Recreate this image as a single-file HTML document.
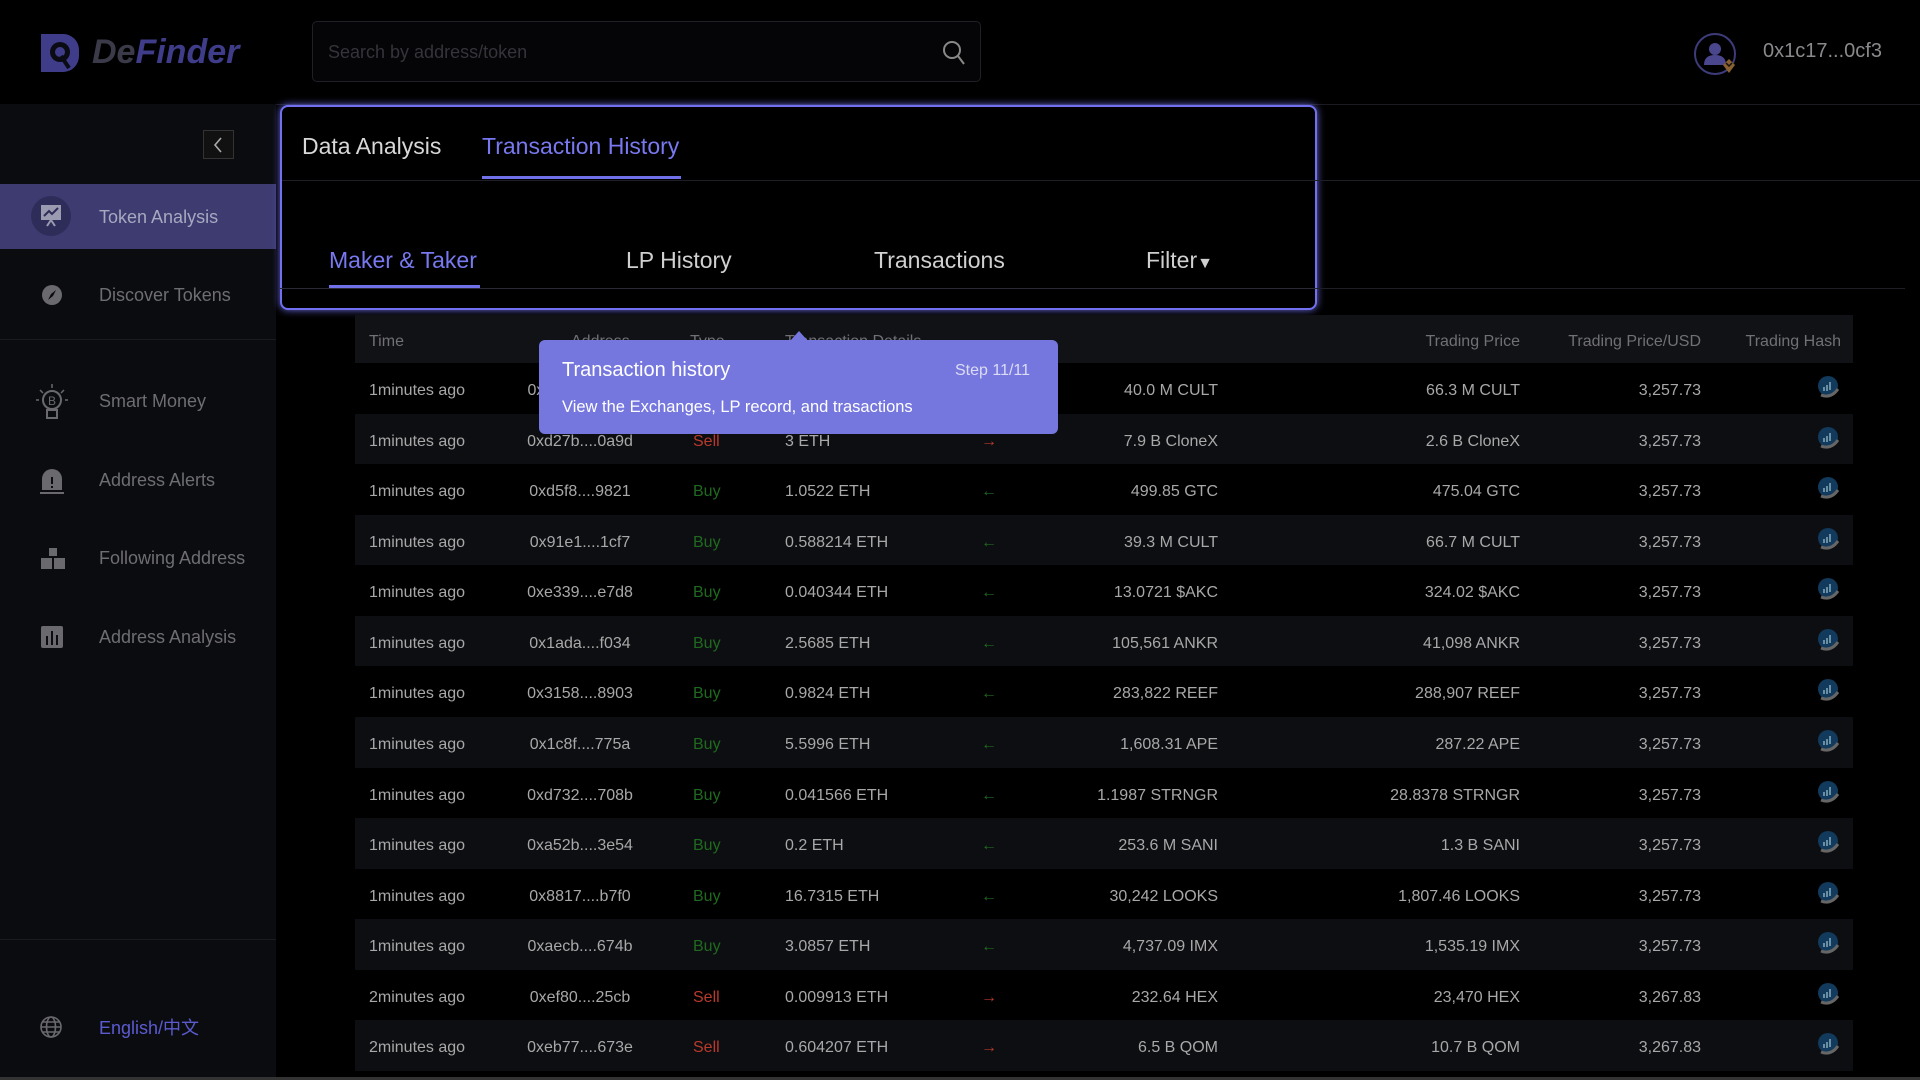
<!DOCTYPE html>
<html><head><meta charset="utf-8"><style>
*{margin:0;padding:0;box-sizing:border-box}
body{width:1920px;height:1080px;background:#000;font-family:"Liberation Sans",sans-serif;position:relative;overflow:hidden;color:#a8a8a8}
.a{position:absolute;white-space:nowrap}
.side{position:absolute;left:0;top:104px;width:276px;height:976px;background:#0b0c10}
.nav{position:absolute;left:99px;font-size:18px;color:#6e6e72}
.hl{position:absolute;left:0;top:80px;width:276px;height:65px;background:#3d3b70}
.row{position:absolute;left:355px;width:1498px;height:50.6px;font-size:16px;color:#a8a8a8}
.row span{position:absolute;top:19px;white-space:nowrap}
.g{background:#0d0e11}
.r{text-align:right}
</style></head><body>
<div class="a" style="left:0;top:104px;width:1920px;height:1px;background:#1a1b22"></div>
<svg class="a" style="left:39px;top:32px" width="42" height="42" viewBox="0 0 42 42"><path d="M2 2h22a16 16 0 0 1 16 16v6a16 16 0 0 1-16 16H2z" fill="#3f3d8a"/><circle cx="21" cy="20" r="10" fill="#0b0b14"/><circle cx="21" cy="20" r="5" fill="#3f3d8a"/><path d="M22 24l8 12" stroke="#0b0b14" stroke-width="4"/></svg>
<div class="a" style="left:92px;top:33px;font-size:34px;font-weight:bold;font-style:italic;color:#3f3d8a"><span style="color:#3a3a48">De</span>Finder</div>
<div class="a" style="left:312px;top:21px;width:669px;height:61px;border:1px solid #1f2026;border-radius:5px;background:#050507"></div>
<div class="a" style="left:328px;top:42px;font-size:18px;color:#34343a">Search by address/token</div>
<svg class="a" style="left:942px;top:40px" width="24" height="26" viewBox="0 0 24 26"><circle cx="10" cy="10" r="8" fill="none" stroke="#888" stroke-width="2"/><path d="M16 16l6 8" stroke="#888" stroke-width="2"/></svg>
<svg class="a" style="left:1693px;top:32px" width="50" height="50" viewBox="0 0 50 50"><circle cx="22" cy="22" r="20" fill="none" stroke="#3d3b7a" stroke-width="2"/><circle cx="22" cy="17" r="6" fill="#4a478e"/><path d="M11 33q0-10 11-10t11 10z" fill="#4a478e"/><path d="M30 33l6-6 6 6-6 8z" fill="#8a6030"/><path d="M33 31l3 3 3-3" stroke="#111" fill="none" stroke-width="1.5"/></svg>
<div class="a" style="left:1763px;top:40px;font-size:20px;color:#8a8a8e">0x1c17...0cf3</div>

<div class="side">
 <div class="a" style="left:203px;top:26px;width:31px;height:29px;border:1px solid #333;background:#111"></div>
 <svg class="a" style="left:212px;top:32px" width="12" height="18" viewBox="0 0 12 18"><path d="M9 2L3 9l6 7" stroke="#aaa" stroke-width="1.6" fill="none"/></svg>
 <div class="hl"></div>
 <div class="a" style="left:31px;top:92px;width:40px;height:40px;border-radius:50%;background:#2e2c58"></div>
 <svg class="a" style="left:40px;top:100px" width="22" height="24" viewBox="0 0 22 24"><rect x="1" y="1" width="20" height="15" fill="#9a9ab0"/><path d="M4 12l5-5 3 3 6-6" stroke="#2e2c58" stroke-width="2" fill="none"/><path d="M7 22l4-6 4 6" stroke="#9a9ab0" stroke-width="2" fill="none"/></svg>
 <div class="nav" style="top:103px;color:#a8a8c0">Token Analysis</div>
 <svg class="a" style="left:41px;top:180px" width="22" height="22" viewBox="0 0 22 22"><circle cx="11" cy="11" r="10" fill="#6a6a6e"/><path d="M15 6l-3 6-5 4 3-6z" fill="#0b0c10"/></svg>
 <div class="nav" style="top:181px">Discover Tokens</div>
 <div class="a" style="left:0;top:235px;width:276px;height:1px;background:#1b1c22"></div>
 <svg class="a" style="left:34px;top:276px" width="36" height="44" viewBox="0 0 36 44"><circle cx="18" cy="20" r="9" fill="none" stroke="#6a6a6e" stroke-width="2"/><path d="M13 30h10v8h-10z" fill="none" stroke="#6a6a6e" stroke-width="2"/><text x="14" y="25" font-size="12" fill="#6a6a6e" font-family="Liberation Sans">B</text><path d="M18 4v4M6 10l3 3M30 10l-3 3M2 20h3M31 20h3" stroke="#6a6a6e" stroke-width="1.5"/></svg>
 <div class="nav" style="top:287px">Smart Money</div>
 <svg class="a" style="left:40px;top:365px" width="24" height="26" viewBox="0 0 24 26"><path d="M2 21V10a10 10 0 0 1 20 0v11z" fill="#6a6a6e"/><rect x="0" y="23" width="24" height="2" fill="#6a6a6e"/><rect x="11" y="8" width="2" height="7" fill="#0b0c10"/><rect x="11" y="17" width="2" height="2" fill="#0b0c10"/></svg>
 <div class="nav" style="top:366px">Address Alerts</div>
 <svg class="a" style="left:40px;top:443px" width="26" height="24" viewBox="0 0 26 24"><path d="M9 1h8v8h-8zM1 11h11v11H1zM14 11h11v11H14z" fill="#6a6a6e"/></svg>
 <div class="nav" style="top:444px">Following Address</div>
 <svg class="a" style="left:41px;top:522px" width="22" height="22" viewBox="0 0 22 22"><rect width="22" height="22" rx="2" fill="#6a6a6e"/><rect x="5" y="10" width="2" height="9" fill="#0b0c10"/><rect x="10" y="5" width="2" height="14" fill="#0b0c10"/><rect x="15" y="9" width="2" height="10" fill="#0b0c10"/></svg>
 <div class="nav" style="top:523px">Address Analysis</div>
 <div class="a" style="left:0;top:835px;width:276px;height:1px;background:#1b1c22"></div>
 <svg class="a" style="left:39px;top:911px" width="24" height="24" viewBox="0 0 24 24"><circle cx="12" cy="12" r="10" fill="none" stroke="#6a6a6e" stroke-width="1.6"/><ellipse cx="12" cy="12" rx="4.5" ry="10" fill="none" stroke="#6a6a6e" stroke-width="1.6"/><path d="M2 12h20M4 7h16M4 17h16" stroke="#6a6a6e" stroke-width="1.4"/></svg>
 <div class="nav" style="top:910px;color:#5b5bd0;font-family:'Liberation Sans','Noto Sans CJK SC',sans-serif">English/中文</div>
</div>

<div class="a" style="left:280px;top:105px;width:1037px;height:205px;border:2px solid #7070f0;border-radius:8px;box-shadow:0 0 8px #6a6ae0;background:#000"></div>
<div class="a" style="left:282px;top:180px;width:1638px;height:1px;background:#1d1e26"></div>
<div class="a" style="left:302px;top:133px;font-size:23px;color:#d8d8d8">Data Analysis</div>
<div class="a" style="left:482px;top:133px;font-size:23px;color:#7878f0">Transaction History</div>
<div class="a" style="left:482px;top:176px;width:199px;height:3px;background:#7070e8"></div>
<div class="a" style="left:300px;top:288px;width:1605px;height:1px;background:#1d1e26"></div>
<div class="a" style="left:329px;top:247px;font-size:23px;color:#7878f0">Maker &amp; Taker</div>
<div class="a" style="left:329px;top:285px;width:151px;height:3px;background:#7070e8"></div>
<div class="a" style="left:626px;top:247px;font-size:23px;color:#d0d0d0">LP History</div>
<div class="a" style="left:874px;top:247px;font-size:23px;color:#d0d0d0">Transactions</div>
<div class="a" style="left:1146px;top:247px;font-size:23px;color:#d0d0d0">Filter<span style="font-size:16px">&#9660;</span></div>
<div class="a" style="left:280px;top:288px;width:1037px;height:1px;background:#2a2a36"></div>

<div class="row" style="top:315px;height:48px;background:#111215;color:#707075;font-size:16px">
<span style="left:14px;top:18px">Time</span><span style="left:216px;top:18px">Address</span><span style="left:335px;top:18px">Type</span><span style="left:430px;top:18px">Transaction Details</span>
<span class="r" style="right:333px;top:18px">Trading Price</span><span class="r" style="right:152px;top:18px">Trading Price/USD</span><span class="r" style="right:12px;top:18px">Trading Hash</span></div>

<div id="rows"></div>
<script>
var d=[
["1minutes ago","0x4a2c....e12b","Buy","0.5 ETH","40.0 M CULT","66.3 M CULT","3,257.73"],
["1minutes ago","0xd27b....0a9d","Sell","3 ETH","7.9 B CloneX","2.6 B CloneX","3,257.73"],
["1minutes ago","0xd5f8....9821","Buy","1.0522 ETH","499.85 GTC","475.04 GTC","3,257.73"],
["1minutes ago","0x91e1....1cf7","Buy","0.588214 ETH","39.3 M CULT","66.7 M CULT","3,257.73"],
["1minutes ago","0xe339....e7d8","Buy","0.040344 ETH","13.0721 $AKC","324.02 $AKC","3,257.73"],
["1minutes ago","0x1ada....f034","Buy","2.5685 ETH","105,561 ANKR","41,098 ANKR","3,257.73"],
["1minutes ago","0x3158....8903","Buy","0.9824 ETH","283,822 REEF","288,907 REEF","3,257.73"],
["1minutes ago","0x1c8f....775a","Buy","5.5996 ETH","1,608.31 APE","287.22 APE","3,257.73"],
["1minutes ago","0xd732....708b","Buy","0.041566 ETH","1.1987 STRNGR","28.8378 STRNGR","3,257.73"],
["1minutes ago","0xa52b....3e54","Buy","0.2 ETH","253.6 M SANI","1.3 B SANI","3,257.73"],
["1minutes ago","0x8817....b7f0","Buy","16.7315 ETH","30,242 LOOKS","1,807.46 LOOKS","3,257.73"],
["1minutes ago","0xaecb....674b","Buy","3.0857 ETH","4,737.09 IMX","1,535.19 IMX","3,257.73"],
["2minutes ago","0xef80....25cb","Sell","0.009913 ETH","232.64 HEX","23,470 HEX","3,267.83"],
["2minutes ago","0xeb77....673e","Sell","0.604207 ETH","6.5 B QOM","10.7 B QOM","3,267.83"]];
var h="";
d.forEach(function(r,i){
var s=r[2]=="Sell";
h+='<div class="row'+(i%2?' g':'')+'" style="top:'+(363+i*50.57)+'px">'+
'<span style="left:14px">'+r[0]+'</span>'+
'<span style="left:170px;width:110px;text-align:center">'+r[1]+'</span>'+
'<span style="left:338px;color:'+(s?'#b83a2c':'#1f6a1f')+'">'+r[2]+'</span>'+
'<span style="left:430px">'+r[3]+'</span>'+
'<span style="left:626px;color:'+(s?'#b83a2c':'#1f6a1f')+'">'+(s?'&rarr;':'&larr;')+'</span>'+
'<span class="r" style="right:635px">'+r[4]+'</span>'+
'<span class="r" style="right:333px">'+r[5]+'</span>'+
'<span class="r" style="right:152px">'+r[6]+'</span>'+
'<span style="left:1462px;top:12px"><svg width="22" height="24" viewBox="0 0 22 24"><circle cx="11" cy="11" r="10" fill="#123a5c"/><path d="M4 20q10 4 17-6" stroke="#666" stroke-width="3" fill="none"/><path d="M7 16v-4M10 16v-6M13 15v-8" stroke="#8ab" stroke-width="1.5"/></svg></span>'+
'</div>';});
document.getElementById("rows").innerHTML=h;
</script>
<div class="a" style="left:0;top:1077px;width:1920px;height:3px;background:#333"></div>

<div class="a" style="left:790px;top:331px;width:0;height:0;border-left:9px solid transparent;border-right:9px solid transparent;border-bottom:10px solid #7577de"></div>
<div class="a" style="left:539px;top:340px;width:519px;height:94px;background:#7577de;border-radius:6px"></div>
<div class="a" style="left:562px;top:359px;font-size:20px;color:#fff">Transaction history</div>
<div class="a" style="left:955px;top:362px;font-size:16px;color:#dcdcf4">Step 11/11</div>
<div class="a" style="left:562px;top:398px;font-size:16.5px;color:#fff">View the Exchanges, LP record, and trasactions</div>
</body></html>
